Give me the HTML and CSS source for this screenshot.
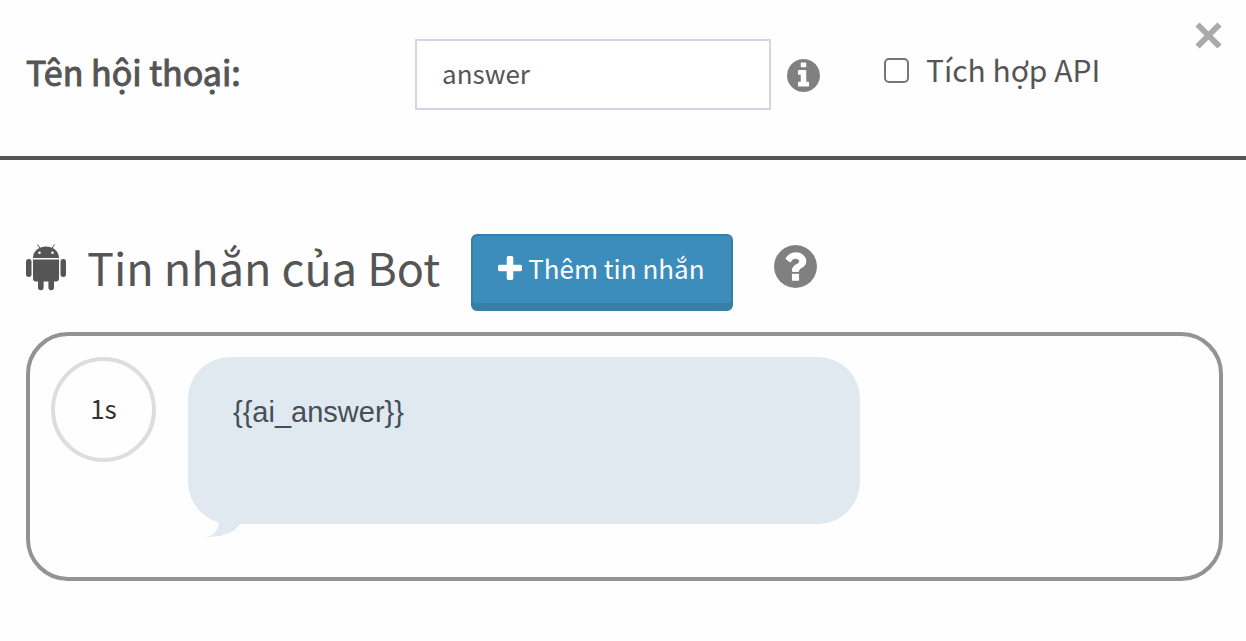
FILE: index.html
```
<!DOCTYPE html>
<html lang="vi">

<head>
    <meta charset="UTF-8">
    <meta name="viewport" content="width=device-width, initial-scale=1.0">
    <title>Hội thoại</title>
    <link rel="stylesheet" href="styles.css">
</head>

<body>
    <form class="dialog">
        <header class="dialog-header">
            <label class="dialog-label" for="dialog-name">Tên hội thoại:</label>
            <div class="name-field">
                <input type="text" class="name-input" id="dialog-name" name="dialog-name" value="answer">
                <svg class="icon-info" viewBox="128 128 1536 1536" aria-hidden="true">
                    <path d="M1152 1376v-160q0-14-9-23t-23-9h-96v-512q0-14-9-23t-23-9h-320q-14 0-23 9t-9 23v160q0 14 9 23t23 9h96v320h-96q-14 0-23 9t-9 23v160q0 14 9 23t23 9h448q14 0 23-9t9-23zm-128-896v-160q0-14-9-23t-23-9h-192q-14 0-23 9t-9 23v160q0 14 9 23t23 9h192q14 0 23-9t9-23zm640 416q0 209-103 385.500t-279.500 279.500-385.500 103-385.500-103-279.500-279.500-103-385.500 103-385.500 279.500-279.500 385.500-103 385.500 103 279.500 279.500 103 385.500z"/>
                </svg>
            </div>
            <label class="api-option" for="use-api">
                <input type="checkbox" class="api-checkbox" id="use-api" name="use-api">
                Tích hợp API
            </label>
            <button type="button" class="close-btn" aria-label="Đóng">
                <svg class="icon-close" viewBox="0 0 27 27" aria-hidden="true">
                    <path d="M2.500 2.500L24.500 24.500M24.500 2.500L2.500 24.500"/>
                </svg>
            </button>
        </header>

        <main class="dialog-body">
            <div class="bot-title">
                <svg class="icon-android" viewBox="0 0 40 47" aria-hidden="true">
                    <path d="M11.500 0.500L14.500 5M28.500 0.500L25.500 5" class="antenna"/>
                    <path fill-rule="evenodd" d="M7 14C7 7 13 2.500 20 2.500S33 7 33 14ZM13.500 7.500a1.300 1.300 0 1 0 0 2.600a1.300 1.300 0 0 0 0-2.600ZM26.500 7.500a1.300 1.300 0 1 0 0 2.600a1.300 1.300 0 0 0 0-2.600Z"/>
                    <path d="M7 15.500H33V34.500Q33 37.500 30 37.500H28V43.500A2.800 2.800 0 0 1 22.400 43.500V37.500H17.600V43.500A2.800 2.800 0 0 1 12 43.500V37.500H10Q7 37.500 7 34.500Z"/>
                    <rect x="0" y="15" width="5.500" height="18" rx="2.700"/>
                    <rect x="34.500" y="15" width="5.500" height="18" rx="2.700"/>
                </svg>
                <h2>Tin nhắn của Bot</h2>
                <button type="button" class="add-btn">
                    <svg class="icon-plus" viewBox="192 128 1408 1408" aria-hidden="true">
                        <path d="M1600 736v192q0 40-28 68t-68 28h-416v416q0 40-28 68t-68 28h-192q-40 0-68-28t-28-68v-416h-416q-40 0-68-28t-28-68v-192q0-40 28-68t68-28h416v-416q0-40 28-68t68-28h192q40 0 68 28t28 68v416h416q40 0 68 28t28 68z"/>
                    </svg>
                    Thêm tin nhắn
                </button>
                <svg class="icon-help" viewBox="128 128 1536 1536" aria-hidden="true">
                    <path d="M1024 1376v-192q0-14-9-23t-23-9h-192q-14 0-23 9t-9 23v192q0 14 9 23t23 9h192q14 0 23-9t9-23zm256-672q0-88-55.500-163t-138.500-116-170-41q-243 0-371 213-15 24 8 42l132 100q7 6 19 6 16 0 25-12 53-68 86-92 34-24 86-24 48 0 85.500 26t37.500 59q0 38-20 61t-68 45q-63 28-115.500 86.500t-52.500 125.500v36q0 14 9 23t23 9h192q14 0 23-9t9-23q0-19 21.500-49.500t54.500-49.500q32-18 49-28.500t46-35 44.500-48 28-60.500 12.500-81zm384 192q0 209-103 385.500t-279.500 279.500-385.500 103-385.500-103-279.500-279.500-103-385.500 103-385.500 279.500-279.500 385.500-103 385.500 103 279.500 279.500 103 385.500z"/>
                </svg>
            </div>

            <section class="message-box">
                <div class="delay">1s</div>
                <div class="bubble">
                    <textarea class="bubble-text" name="message" rows="2" aria-label="Tin nhắn">{{ai_answer}}</textarea>
                    <svg class="bubble-tail" viewBox="0 0 36 18" aria-hidden="true">
                        <path d="M14 0Q14 15 0 17Q27 17 35 4V0Z"/>
                    </svg>
                </div>
            </section>
        </main>
    </form>
</body>

</html>
```
FILE: styles.css
```
* {
    box-sizing: border-box;
}

body {
    margin: 0;
    background-color: #fefefe;
    color: #555;
    font-family: "Noto Sans CJK SC", "Noto Sans", sans-serif;
}

svg {
    display: block;
    flex-shrink: 0;
    fill: currentColor;
}

.dialog-header {
    position: relative;
    display: grid;
    grid-template-columns: 389px 469px 1fr;
    align-items: start;
    padding: 39px 0 46px 26px;
    border-bottom: 4px solid #555;
}

.dialog-label {
    font-size: 34px;
    line-height: 66px;
    -webkit-text-stroke: 1px #555;
}

.name-field {
    display: flex;
    align-items: center;
    gap: 16px;
}

.name-input {
    width: 356px;
    padding: 12px 25px 16px;
    border: 2px solid #d2d6e2;
    background-color: white;
    color: #555;
    font-family: inherit;
    font-size: 26px;
    line-height: 39px;
}

.icon-info {
    width: 33px;
    height: 33px;
    margin-top: 2px;
    color: #808080;
}

.api-option {
    display: flex;
    align-items: center;
    gap: 17px;
    font-size: 30px;
    line-height: 60px;
}

.api-checkbox {
    appearance: none;
    width: 25px;
    height: 25px;
    margin: 3px 0 0;
    border: 2px solid #767676;
    border-radius: 5px;
    background-color: white;
}

.api-checkbox:checked {
    background-color: #3c8dbc;
}

.close-btn {
    position: absolute;
    top: 22px;
    right: 24px;
    padding: 0;
    border: none;
    background: none;
    color: #aaa;
    cursor: pointer;
}

.icon-close {
    width: 27px;
    height: 27px;
    fill: none;
    stroke: currentColor;
    stroke-width: 6;
}

.dialog-body {
    padding: 74px 23px 60px 26px;
}

.bot-title {
    display: flex;
    align-items: center;
    margin-bottom: 21px;
}

.icon-android {
    width: 40px;
    height: 47px;
    margin-bottom: 10px;
}

.antenna {
    fill: none;
    stroke: currentColor;
    stroke-width: 1;
}

h2 {
    margin: 0 31px 12px 21px;
    font-size: 45px;
    font-weight: normal;
    line-height: 65px;
    white-space: nowrap;
}

.add-btn {
    display: flex;
    align-items: center;
    gap: 6px;
    height: 77px;
    padding: 0 26px 10px 25px;
    border: 2px solid #367fa9;
    border-radius: 6px;
    background-color: #3c8dbc;
    box-shadow: inset 0 -6px 0 #367fa9;
    color: white;
    font-family: inherit;
    font-size: 26px;
    white-space: nowrap;
    cursor: pointer;
}

.icon-plus {
    width: 24px;
    height: 24px;
}

.icon-help {
    width: 43px;
    height: 43px;
    margin: 0 0 12px 41px;
    color: #808080;
}

.message-box {
    display: flex;
    align-items: flex-start;
    gap: 32px;
    padding: 21px 21px 53px;
    border: 4px solid #939393;
    border-radius: 42px;
}

.delay {
    flex-shrink: 0;
    width: 105px;
    height: 105px;
    border: 4px solid #ddd;
    border-radius: 50%;
    color: #333;
    font-size: 26px;
    line-height: 94px;
    text-align: center;
}

.bubble {
    position: relative;
    flex: 0 1 672px;
}

.bubble-text {
    display: block;
    width: 100%;
    height: 167px;
    padding: 35px 45px;
    border: none;
    border-radius: 42px;
    background-color: #e0e8f0;
    color: #444f58;
    font-family: "Liberation Sans", Arial, sans-serif;
    font-size: 29px;
    line-height: 40px;
    resize: none;
}

.bubble-tail {
    position: absolute;
    bottom: -14px;
    left: 17px;
    width: 36px;
    height: 18px;
    color: #e0e8f0;
}
```
